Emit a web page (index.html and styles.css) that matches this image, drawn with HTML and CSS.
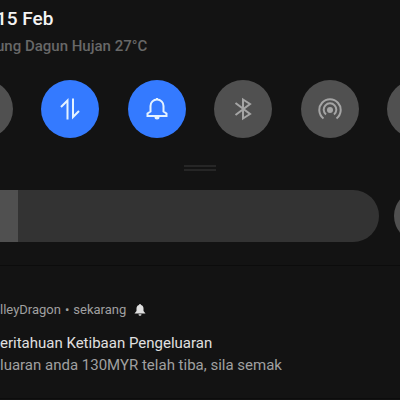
FILE: index.html
```
<!DOCTYPE html>
<html lang="ms">
<head>
  <meta charset="UTF-8">
  <meta name="viewport" content="width=device-width, initial-scale=1.0">
  <title>Quick Settings</title>
  <link rel="stylesheet" href="styles.css">
</head>
<body>
  <header class="header">
    <h1 class="date">15 Feb</h1>
    <p class="weather">ung Dagun Hujan 27°C</p>
  </header>

  <div class="toggles">
    <button class="toggle" aria-label="Wi-Fi"></button>
    <button class="toggle on" aria-label="Mobile data">
      <svg viewBox="0 0 24 24"><path d="M3 10 9.500 3.500V22.500M15 1.500V20L21 14"/></svg>
    </button>
    <button class="toggle on" aria-label="Ring">
      <svg viewBox="0 0 24 24"><path d="M2.500 19V16.500L5.500 14.500V9a6.500 6.500 0 0 1 13 0V14.500L21.500 16.500V19ZM12 2.500V1"/><path class="solid" d="M9.500 20h5a2.500 2.500 0 0 1-5 0z"/></svg>
    </button>
    <button class="toggle" aria-label="Bluetooth">
      <svg viewBox="0 0 24 24"><path d="M4.500 6 19 17 12 21.500V2.500L19 7 4.500 18"/></svg>
    </button>
    <button class="toggle" aria-label="Hotspot">
      <svg viewBox="0 0 24 24"><path d="M5.500 21.500a10.700 10.700 0 1 1 13 0M8 17.500a6.300 6.300 0 1 1 8 0"/><circle class="solid" cx="12" cy="13" r="3"/></svg>
    </button>
    <button class="toggle" aria-label="More"></button>
  </div>

  <div class="handle"></div>

  <div class="brightness">
    <input class="slider" type="range" min="0" max="100" value="15" aria-label="Brightness">
    <button class="auto" aria-label="Auto brightness"></button>
  </div>

  <section class="notification">
    <div class="source">
      <span>lleyDragon</span>
      <span>•</span>
      <span>sekarang</span>
      <svg class="bell" viewBox="0 0 12 12"><path d="M6 0a1 1 0 0 1 1 1C9 1.500 9.500 3 9.500 4.500V7L11.500 9.500H.5L2.500 7V4.500C2.500 3 3 1.500 5 1a1 1 0 0 1 1-1zM4.500 10.300h3a1.500 1.500 0 0 1-3 0z"/></svg>
    </div>
    <h2 class="title">eritahuan Ketibaan Pengeluaran</h2>
    <p class="message">luaran anda 130MYR telah tiba, sila semak</p>
  </section>
</body>
</html>
```

FILE: styles.css
```
body {
  margin: 0;
  background: #131313;
  font-family: Roboto, sans-serif;
  overflow: hidden;
}
h1, h2, p {
  margin: 0;
  white-space: nowrap;
}
button {
  border: none;
  padding: 0;
}
.header {
  margin-left: -4px;
  padding-top: 7px;
}
.date {
  font-size: 19px;
  line-height: 24px;
  font-weight: 500;
  color: #f4f4f4;
}
.weather {
  margin-top: 5px;
  font-size: 15px;
  line-height: 20px;
  font-weight: 500;
  color: #686868;
}
.toggles {
  display: flex;
  justify-content: space-between;
  margin: 24px -45px 0;
}
.toggle {
  display: flex;
  align-items: center;
  justify-content: center;
  width: 58px;
  height: 58px;
  border-radius: 50%;
  background: #505050;
  color: #a5a5a5;
}
.toggle.on {
  background: #347aff;
  color: #e4f2ff;
}
.toggle svg {
  width: 24px;
  height: 24px;
  fill: none;
  stroke: currentColor;
  stroke-width: 2;
}
.toggle .solid {
  fill: currentColor;
  stroke: none;
}
.handle {
  width: 32px;
  height: 2px;
  margin: 27px auto 0;
  border-top: 2px solid #262626;
  border-bottom: 2px solid #262626;
}
.brightness {
  display: flex;
  gap: 15px;
  margin: 19px -46px 0;
  padding-bottom: 23px;
  border-bottom: 1px solid #0c0c0c;
}
.slider {
  flex: 1;
  min-width: 0;
  height: 52px;
  margin: 0;
  appearance: none;
  border-radius: 26px;
  background: linear-gradient(to right, #505050 15%, #333 15%);
}
.slider::-webkit-slider-thumb {
  appearance: none;
  width: 1px;
  height: 52px;
  background: transparent;
}
.auto {
  width: 52px;
  height: 52px;
  border-radius: 50%;
  background: #505050;
}
.notification {
  padding: 34px 0 22px;
  border-bottom: 1px solid #0c0c0c;
}
.source {
  display: flex;
  align-items: center;
  gap: 4px;
  font-size: 13px;
  line-height: 20px;
  color: #a0a0a0;
}
.bell {
  width: 12px;
  height: 12px;
  margin-left: 4px;
  fill: #e0e0e0;
}
.title {
  margin-top: 12px;
  font-size: 15px;
  line-height: 22px;
  font-weight: 400;
  color: #e0e0e0;
}
.message {
  font-size: 15px;
  line-height: 22px;
  color: #a0a0a0;
}
```
